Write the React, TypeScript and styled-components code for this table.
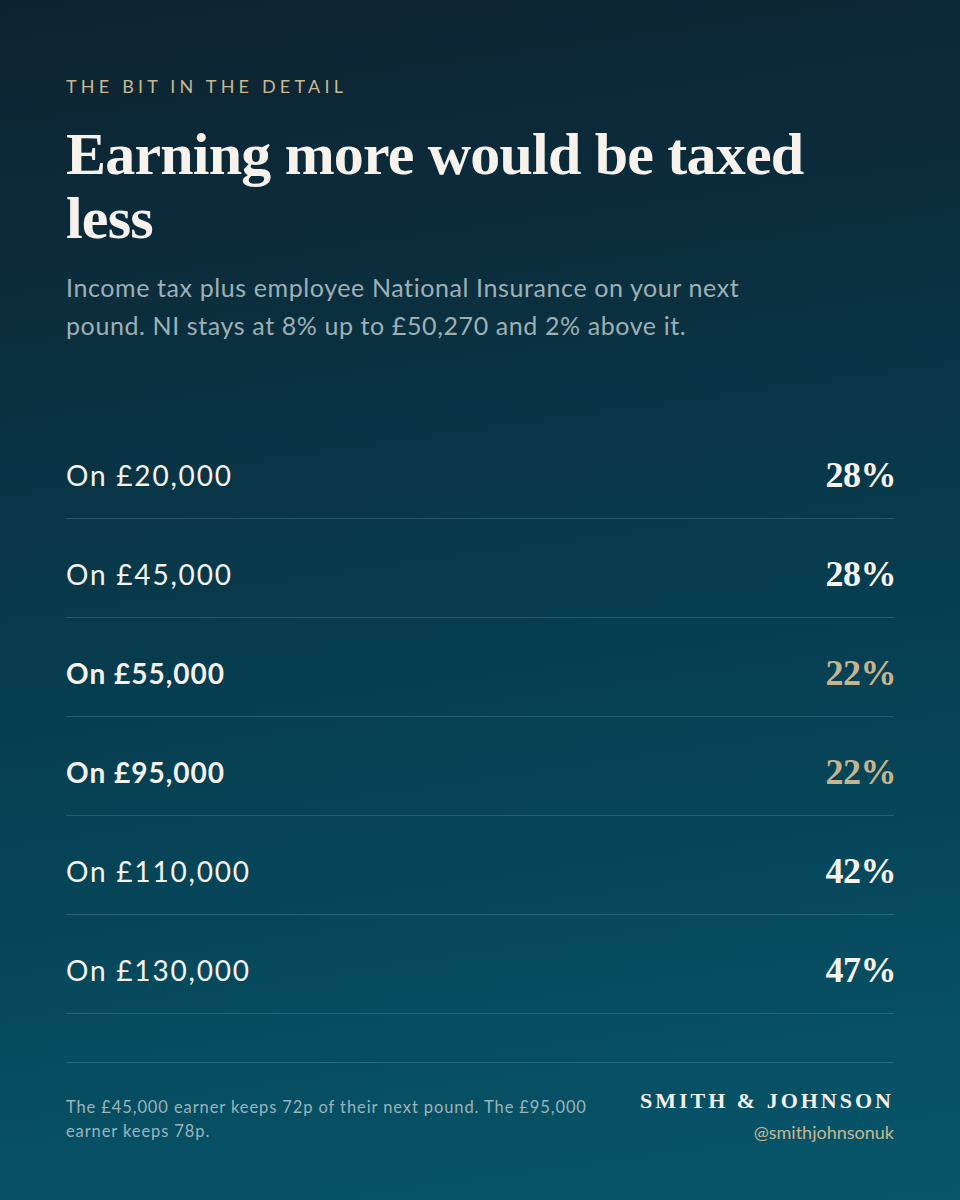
import React from "react";
import styled, { createGlobalStyle } from "styled-components";

const Global = createGlobalStyle`
  html, body { margin: 0; padding: 0; }
  body { background: #0b3344; }
`;

const Page = styled.div`
  width: 960px;
  height: 1200px;
  box-sizing: border-box;
  padding: 72px 66px 0 66px;
  background: linear-gradient(172deg, #0d2230 0%, #0b2e3d 25%, #063e51 55%, #07566b 100%);
  display: flex;
  flex-direction: column;
  font-family: "Lato", "Open Sans", sans-serif;
  color: #f6f1ea;
`;

const Kicker = styled.div`
  font-family: "Lato", sans-serif;
  font-size: 18px;
  letter-spacing: 4.2px;
  color: #c8b892;
  line-height: 28px;
  text-transform: uppercase;
`;

const Title = styled.h1`
  margin: 22px 0 0 0;
  font-family: "Liberation Serif", "DejaVu Serif", serif;
  font-weight: 700;
  font-size: 60px;
  line-height: 64px;
  letter-spacing: -0.8px;
  color: #f7f2ec;
  max-width: 780px;
`;

const Sub = styled.p`
  margin: 18px 0 0 0;
  font-family: "Lato", sans-serif;
  font-size: 25px;
  line-height: 38px;
  letter-spacing: 0.6px;
  color: #9fb0b5;
  max-width: 720px;
`;

const List = styled.div`
  margin-top: 76px;
  display: flex;
  flex-direction: column;
`;

const Row = styled.div`
  height: 99px;
  box-sizing: border-box;
  padding-top: 12px;
  display: flex;
  align-items: center;
  justify-content: space-between;
  border-bottom: 1px solid rgba(120, 170, 185, 0.28);
`;

const Label = styled.span<{ $strong?: boolean }>`
  font-family: "Lato", sans-serif;
  font-size: 28px;
  font-weight: ${(p) => (p.$strong ? 700 : 400)};
  letter-spacing: ${(p) => (p.$strong ? "1px" : "1.8px")};
  color: #f6f1ea;
`;

const Pct = styled.span<{ $gold?: boolean }>`
  font-family: "Liberation Serif", "DejaVu Serif", serif;
  font-size: 36px;
  font-weight: 700;
  letter-spacing: -0.5px;
  margin-right: -2px;
  color: ${(p) => (p.$gold ? "#c6b48f" : "#f7f2ec")};
`;

const Footer = styled.div`
  margin-top: 48px;
  border-top: 1px solid rgba(120, 170, 185, 0.28);
  padding-top: 24px;
  display: flex;
  justify-content: space-between;
  align-items: flex-start;
`;

const Note = styled.p`
  margin: 8px 0 0 0;
  font-family: "Lato", sans-serif;
  font-size: 16.5px;
  line-height: 24px;
  letter-spacing: 0.9px;
  color: #9cb4ba;
  max-width: 545px;
`;

const Brand = styled.div`
  display: flex;
  flex-direction: column;
  align-items: flex-end;
`;

const BrandName = styled.div`
  font-family: "Liberation Serif", serif;
  font-weight: 700;
  font-size: 22px;
  letter-spacing: 3px;
  color: #f4efe8;
  line-height: 28px;
`;

const Handle = styled.div`
  margin-top: 6px;
  font-family: "Lato", sans-serif;
  font-size: 18px;
  color: #c8b892;
`;

const rows = [
  { label: "On £20,000", pct: "28%" },
  { label: "On £45,000", pct: "28%" },
  { label: "On £55,000", pct: "22%", hi: true },
  { label: "On £95,000", pct: "22%", hi: true },
  { label: "On £110,000", pct: "42%" },
  { label: "On £130,000", pct: "47%" },
];

export default function App() {
  return (
    <>
      <Global />
      <Page>
        <Kicker>The bit in the detail</Kicker>
        <Title>Earning more would be taxed less</Title>
        <Sub>
          Income tax plus employee National Insurance on your next pound. NI stays at 8% up to £50,270 and 2% above it.
        </Sub>
        <List>
          {rows.map((r) => (
            <Row key={r.label}>
              <Label $strong={r.hi}>{r.label}</Label>
              <Pct $gold={r.hi}>{r.pct}</Pct>
            </Row>
          ))}
        </List>
        <Footer>
          <Note>The £45,000 earner keeps 72p of their next pound. The £95,000 earner keeps 78p.</Note>
          <Brand>
            <BrandName>SMITH &amp; JOHNSON</BrandName>
            <Handle>@smithjohnsonuk</Handle>
          </Brand>
        </Footer>
      </Page>
    </>
  );
}
